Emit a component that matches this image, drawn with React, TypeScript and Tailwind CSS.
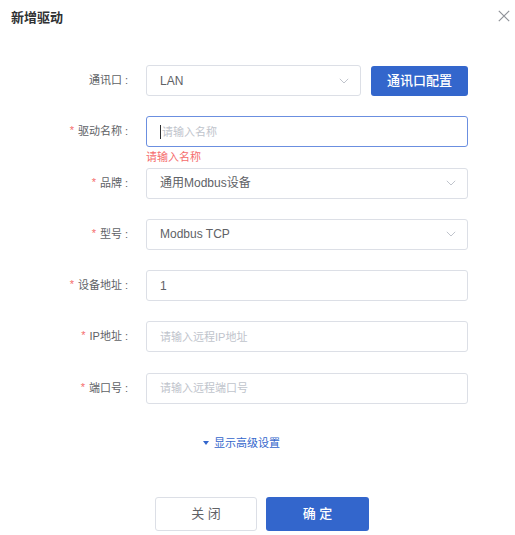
import React from "react";

const FONT = '"Liberation Sans", "Noto Sans CJK SC", sans-serif';

function Chevron() {
  return (
    <svg width="10" height="6" viewBox="0 0 10 6" fill="none">
      <path d="M0.8 0.8 L5 5 L9.2 0.8" stroke="#c0c4cc" strokeWidth="1" />
    </svg>
  );
}

function Label({ text, required }: { text: string; required?: boolean }) {
  return (
    <div className="w-[128px] shrink-0 flex items-center justify-end text-[11px] text-[#606266] leading-none">
      {required && <span className="text-[#f56c6c] mr-[4px] text-[11px] relative top-[-1px]">*</span>}
      <span>{text}</span>
      <span className="ml-[3px]">:</span>
    </div>
  );
}

function Select({ value, w }: { value: string; w: string }) {
  return (
    <div
      className={`${w} h-[31px] ml-[18px] border border-[#dcdfe6] rounded-[3px] bg-white flex items-center justify-between pl-[13px] pr-[11px] text-[12px] text-[#606266]`}
    >
      <span>{value}</span>
      <Chevron />
    </div>
  );
}

function Input({ value, placeholder }: { value?: string; placeholder?: string }) {
  return (
    <div className="w-[322px] h-[31px] ml-[18px] border border-[#dcdfe6] rounded-[3px] bg-white flex items-center pl-[13px] text-[12px]">
      {value ? (
        <span className="text-[#606266]">{value}</span>
      ) : (
        <span className="text-[#c0c4cc] text-[11px]">{placeholder}</span>
      )}
    </div>
  );
}

export default function App() {
  return (
    <div className="w-[515px] h-[535px] bg-white" style={{ fontFamily: FONT }}>
      <div className="flex justify-between pt-[10px] pl-[11px] pr-[5px]">
        <div className="text-[13px] leading-[16px] font-bold text-[#303133]">新增驱动</div>
        <svg width="12" height="12" viewBox="0 0 12 12" className="mr-[0px] mt-[0px]">
          <path d="M0.8 0.8 L11.2 11.2 M11.2 0.8 L0.8 11.2" stroke="#909399" strokeWidth="1.2" />
        </svg>
      </div>

      <div className="mt-[39px] flex flex-col gap-[20.3px]">
        <div className="flex items-center h-[31px]">
          <Label text="通讯口" />
          <Select value="LAN" w="w-[215px]" />
          <button className="ml-[10px] w-[97px] h-[30px] rounded-[3px] bg-[#3366cc] text-white text-[13px] font-medium flex items-center justify-center">
            通讯口配置
          </button>
        </div>

        <div className="relative flex items-center h-[31px]">
          <Label text="驱动名称" required />
          <div className="w-[322px] h-[31px] ml-[18px] border border-[#6b8fe0] rounded-[3px] bg-white flex items-center pl-[13px]">
            <span className="w-[1px] h-[14px] bg-[#303133] mr-[1px]" />
            <span className="text-[#c0c4cc] text-[11px]">请输入名称</span>
          </div>
          <div className="absolute left-[146px] top-full mt-[4px] text-[11px] leading-[12px] text-[#f56c6c]">
            请输入名称
          </div>
        </div>

        <div className="flex items-center h-[31px]">
          <Label text="品牌" required />
          <Select value="通用Modbus设备" w="w-[322px]" />
        </div>

        <div className="flex items-center h-[31px]">
          <Label text="型号" required />
          <Select value="Modbus TCP" w="w-[322px]" />
        </div>

        <div className="flex items-center h-[31px]">
          <Label text="设备地址" required />
          <Input value="1" />
        </div>

        <div className="flex items-center h-[31px]">
          <Label text="IP地址" required />
          <Input placeholder="请输入远程IP地址" />
        </div>

        <div className="flex items-center h-[31px]">
          <Label text="端口号" required />
          <Input placeholder="请输入远程端口号" />
        </div>
      </div>

      <div className="mt-[32px] pl-[203px] flex items-center h-[14px] text-[11px] text-[#3366cc]">
        <svg width="6" height="4" viewBox="0 0 6 4" className="mr-[5px]">
          <path d="M0 0 L6 0 L3 4 Z" fill="#3366cc" />
        </svg>
        <span>显示高级设置</span>
      </div>

      <div className="mt-[47px] pl-[155px] flex gap-[9px]">
        <button className="w-[102px] h-[34px] rounded-[3px] border border-[#dcdfe6] bg-white text-[13px] text-[#606266]">
          关 闭
        </button>
        <button className="w-[103px] h-[34px] rounded-[3px] bg-[#3366cc] text-[13px] text-white font-medium">
          确 定
        </button>
      </div>
    </div>
  );
}
